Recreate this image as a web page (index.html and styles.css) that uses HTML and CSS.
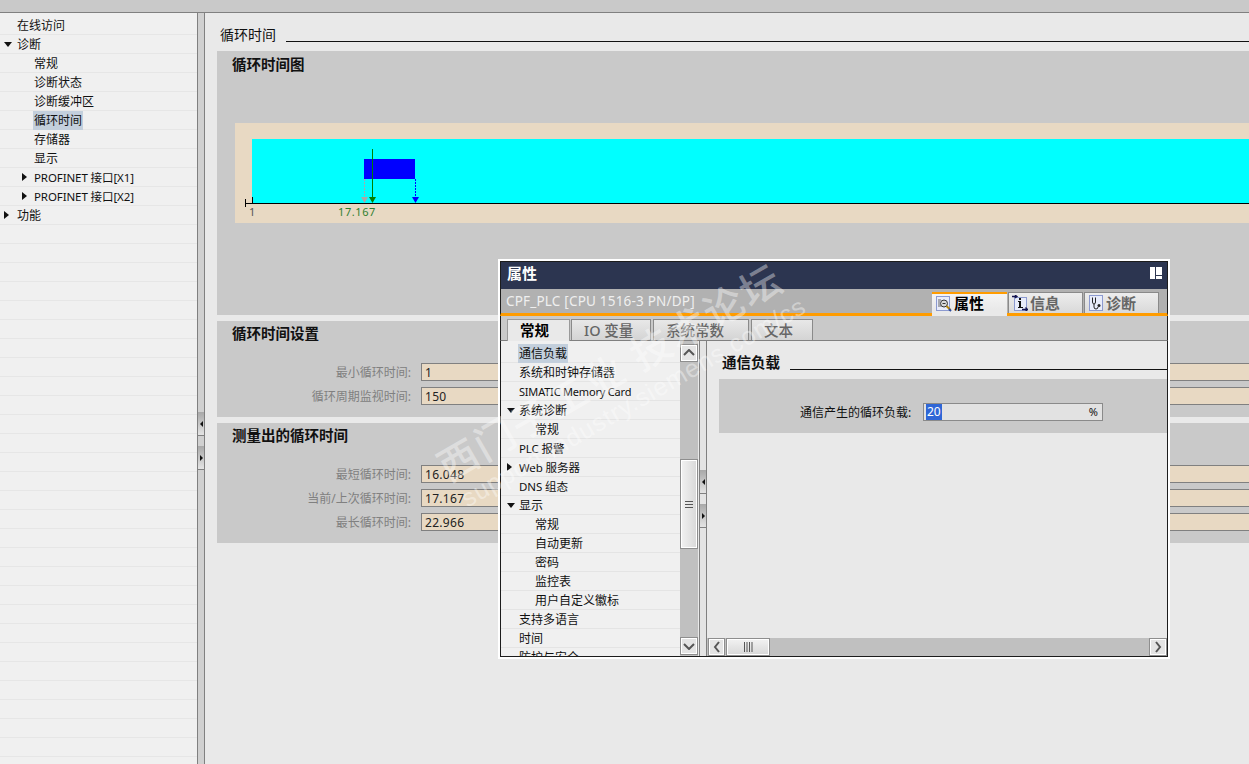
FILE: index.html
```html
<!DOCTYPE html>
<html lang="zh">
<head>
<meta charset="utf-8">
<title>循环时间</title>
<link rel="stylesheet" href="styles.css">
</head>
<body>
<div class="topbar"></div>
<div class="app">
  <nav class="tree">
    <div class="row"><span class="indent1">在线访问</span></div>
    <div class="row"><i class="arrow down a1"></i><span class="indent1">诊断</span></div>
    <div class="row"><span class="indent2">常规</span></div>
    <div class="row"><span class="indent2">诊断状态</span></div>
    <div class="row"><span class="indent2">诊断缓冲区</span></div>
    <div class="row"><span class="indent2 sel">循环时间</span></div>
    <div class="row"><span class="indent2">存储器</span></div>
    <div class="row"><span class="indent2">显示</span></div>
    <div class="row"><i class="arrow right a2"></i><span class="indent2 lat">PROFINET 接口[X1]</span></div>
    <div class="row"><i class="arrow right a2"></i><span class="indent2 lat">PROFINET 接口[X2]</span></div>
    <div class="row"><i class="arrow right a1"></i><span class="indent1">功能</span></div>
  </nav>
  <div class="splitter">
    <div class="grip grip-l"><i class="mini-l"></i></div>
    <div class="grip grip-r"><i class="mini-r"></i></div>
  </div>
  <main class="main">
    <div class="heading"><span>循环时间</span><b class="rule"></b></div>
    <section class="panel p1">
      <h2>循环时间图</h2>
      <div class="chart">
        <svg class="chart-svg" width="1014" height="100" viewBox="0 0 1014 100">
          <rect x="17" y="16" width="997" height="64" fill="#00ffff"/>
          <rect x="129" y="36" width="51" height="20" fill="#0000ff"/>
          <path d="M10 80.500H1014" stroke="#000"/>
          <path d="M10.500 76V84M17.500 74V80" stroke="#000"/>
          <path d="M129.500 56V75" stroke="#a8a8a8" stroke-dasharray="2 1"/>
          <path d="M126 74h7l-3.500 6z" fill="#a8a8a8"/>
          <path d="M137.500 26V75" stroke="#008000"/>
          <path d="M134 74h7l-3.500 6z" fill="#008000"/>
          <path d="M180.500 56V75" stroke="#0000ff" stroke-dasharray="2 1"/>
          <path d="M177 74h7l-3.500 6z" fill="#0000ff"/>
          <text x="14" y="93" class="t1">1</text>
          <text x="103" y="93" class="t2">17.167</text>
        </svg>
      </div>
    </section>
    <section class="panel p2">
      <h2>循环时间设置</h2>
      <div class="fields f2">
        <div class="field"><label>最小循环时间:</label><div class="val">1</div></div>
        <div class="field"><label>循环周期监视时间:</label><div class="val">150</div></div>
      </div>
    </section>
    <section class="panel p3">
      <h2>测量出的循环时间</h2>
      <div class="fields f3">
        <div class="field"><label>最短循环时间:</label><div class="val">16.048</div></div>
        <div class="field"><label>当前/上次循环时间:</label><div class="val">17.167</div></div>
        <div class="field"><label>最长循环时间:</label><div class="val">22.966</div></div>
      </div>
    </section>
  </main>
</div>

<div class="dialog">
  <div class="d-title"><span>属性</span>
    <svg width="12" height="12" viewBox="0 0 12 12"><path d="M0 0h5v12H0zM6 0h6v8H6zM6 9h6v3H6z" fill="#fff"/></svg>
  </div>
  <div class="d-sub">
    <span class="d-name">CPF_PLC [CPU 1516-3 PN/DP]</span>
    <div class="rtabs">
      <div class="rtab on">
        <svg width="16" height="16" viewBox="0 0 16 16"><rect x=".5" y=".5" width="13" height="14" fill="#e8ecfa" stroke="#8c9ad0"/><path d="M2 4h3M2 6h2M2 8h2M2 10h3" stroke="#666"/><circle cx="8" cy="7.500" r="3.500" fill="#d8d8d8" stroke="#333"/><path d="M6.500 7.500h3" stroke="#333"/><path d="M10.500 10l4 4" stroke="#b8860b" stroke-width="2"/><path d="M13 13l2 2" stroke="#2a4aa0" stroke-width="2"/></svg>
        <span>属性</span></div>
      <div class="rtab">
        <svg width="16" height="16" viewBox="0 0 16 16"><rect x="2.500" y="2.500" width="12" height="13" fill="#e8ecfa" stroke="#8c9ad0"/><path d="M0 1.500h4M3 0l2 1.500L3 3" stroke="#15154f" fill="none" stroke-width="1.300"/><path d="M7 3h2v2H7zM6 6h3v6h2v1H6v-1h1V7H6z" fill="#111"/><path d="M10 14.500h5M13.500 12.500l2 2-2 2" stroke="#15154f" fill="none" stroke-width="1.300"/></svg>
        <span>信息</span></div>
      <div class="rtab">
        <svg width="16" height="16" viewBox="0 0 16 16"><rect x="1.500" y=".5" width="13" height="15" fill="#e8ecfa" stroke="#8c9ad0"/><path d="M4.500 2.500V7q0 2 1.500 2t1.500-2V2.500M6 9v3q0 2 2 2t2-2" fill="none" stroke="#222"/><circle cx="11" cy="10.500" r="1.500" fill="#222"/></svg>
        <span>诊断</span></div>
    </div>
  </div>
  <div class="d-tabs">
    <div class="ltab on">常规</div>
    <div class="ltab">IO 变量</div>
    <div class="ltab">系统常数</div>
    <div class="ltab">文本</div>
  </div>
  <div class="d-body">
    <div class="d-nav">
      <div class="d-list">
        <div class="row"><span class="n1 sel">通信负载</span></div>
        <div class="row"><span class="n1">系统和时钟存储器</span></div>
        <div class="row"><span class="n1 lat card">SIMATIC Memory Card</span></div>
        <div class="row"><i class="arrow down a3"></i><span class="n1">系统诊断</span></div>
        <div class="row"><span class="n2">常规</span></div>
        <div class="row"><span class="n1 lat">PLC 报警</span></div>
        <div class="row"><i class="arrow right a3"></i><span class="n1 lat">Web 服务器</span></div>
        <div class="row"><span class="n1 lat">DNS 组态</span></div>
        <div class="row"><i class="arrow down a3"></i><span class="n1">显示</span></div>
        <div class="row"><span class="n2">常规</span></div>
        <div class="row"><span class="n2">自动更新</span></div>
        <div class="row"><span class="n2">密码</span></div>
        <div class="row"><span class="n2">监控表</span></div>
        <div class="row"><span class="n2">用户自定义徽标</span></div>
        <div class="row"><span class="n1">支持多语言</span></div>
        <div class="row"><span class="n1">时间</span></div>
        <div class="row"><span class="n1">防护与安全</span></div>
      </div>
      <div class="vscroll">
        <div class="sbtn"><svg width="12" height="8" viewBox="0 0 12 8"><path d="M1 6l5-5 5 5" fill="none" stroke="#555" stroke-width="2"/></svg></div>
        <div class="vtrack"><div class="vthumb"><svg width="10" height="7" viewBox="0 0 10 7"><path d="M1 .5h8M1 3.500h8M1 6.500h8" stroke="#555"/></svg></div></div>
        <div class="sbtn"><svg width="12" height="8" viewBox="0 0 12 8"><path d="M1 2l5 5 5-5" fill="none" stroke="#555" stroke-width="2"/></svg></div>
      </div>
    </div>
    <div class="d-split">
      <div class="grip grip-dl"><i class="mini-l"></i></div>
      <div class="grip grip-dr"><i class="mini-r"></i></div>
    </div>
    <div class="d-main">
      <div class="d-content">
        <div class="d-heading"><span>通信负载</span><b class="rule"></b></div>
        <div class="d-panel">
          <label>通信产生的循环负载:</label>
          <div class="d-input"><span class="hl">20</span><span class="pct">%</span></div>
        </div>
      </div>
      <div class="hscroll">
        <div class="sbtn hb"><svg width="8" height="12" viewBox="0 0 8 12"><path d="M6 1L2 6l4 5" fill="none" stroke="#555" stroke-width="2"/></svg></div>
        <div class="hthumb"><svg width="10" height="10" viewBox="0 0 10 10"><path d="M1.500 0v10M4 0v10M6.500 0v10M9 0v10" stroke="#555"/></svg></div>
        <div class="hspace"></div>
        <div class="sbtn"><svg width="8" height="12" viewBox="0 0 8 12"><path d="M2 1l4 5-4 5" fill="none" stroke="#555" stroke-width="2"/></svg></div>
      </div>
    </div>
  </div>
</div>

<div class="wm wm1">西门子工业 技术论坛</div>
<div class="wm wm2">support.industry.siemens.com/cs</div>
</body>
</html>
```
FILE: styles.css
```css
* { box-sizing: border-box; }
html, body { margin: 0; height: 764px; overflow: hidden; }
body {
  background: #e9e9e9;
  font: 12px/19px "Noto Sans", "Noto Sans CJK SC", sans-serif;
  color: #111;
  position: relative;
  display: flex;
  flex-direction: column;
}
.topbar { height: 13px; background: #c9c9c9; border-bottom: 1px solid #808080; flex: none; }
.app { flex: 1; display: flex; min-height: 0; }

.tree {
  width: 197px; flex: none; padding-top: 3px;
  background: #f0f0f0 repeating-linear-gradient(#f0f0f0 0 18px, #e6e6e6 18px 19px);
  background-position: 0 3px;
}
.row { height: 19px; position: relative; white-space: nowrap; border-bottom: 1px solid #e6e6e6; }
.indent1 { margin-left: 17px; display: inline-block; }
.indent2 { margin-left: 33px; display: inline-block; padding: 0 1px; }
.lat { letter-spacing: -.1px; font-size: 11.500px; }
.card { font-size: 11px; letter-spacing: -.2px; }
.sel { background: #c3cfdc; }
.arrow { position: absolute; width: 0; height: 0; border-style: solid; border-color: transparent; }
.arrow.down { border-width: 5px 4.500px 0; border-top-color: #111; top: 7px; }
.arrow.right { border-width: 4.500px 0 4.500px 5px; border-left-color: #111; top: 5px; }
.a1 { left: 4px; }
.a2 { left: 22px; }
.a3 { left: 6px; }

.splitter {
  width: 8px; flex: none; background: #d0d0d0;
  border-left: 1px solid #808080; border-right: 1px solid #808080;
  position: relative;
}
.grip {
  position: absolute; left: 0; right: 0; height: 24px; background: linear-gradient(#a8a8a8, #e4e4e4);
  border-bottom: 1px solid #808080; display: flex; align-items: center; justify-content: center;
}
.grip-l { top: 399px; }
.grip-r { top: 433px; }
.mini-l { border: 3.500px solid transparent; border-left: 0; border-right: 3.500px solid #111; }
.mini-r { border: 3.500px solid transparent; border-right: 0; border-left: 3.500px solid #111; }

.main { flex: 1; min-width: 0; padding: 0 0 0 12px; overflow: hidden; }
.heading { height: 38px; display: flex; align-items: center; font-size: 14px; padding: 5px 0 0 3px; }
.rule { flex: 1; height: 1px; background: #111; margin: 14px 0 0 10px; }
.panel { background: #c9c9c9; margin-bottom: 6px; overflow: hidden; }
.panel h2 { font-size: 14.500px; font-weight: 700; line-height: 20px; margin: 0; padding: 2px 0 0 15px; }
.p1 { height: 264px; }
.p1 h2 { padding-top: 3px; }
.p2 { height: 96px; }
.p3 { height: 120px; }
.chart { margin: 49px 0 0 18px; height: 100px; background: #e8d9c3; overflow: hidden; }
.chart-svg { display: block; }
.t1, .t2 { font-size: 11px; font-family: "Noto Sans", sans-serif; letter-spacing: .6px; }
.t1 { fill: #555; }
.t2 { fill: #2f7f2f; }

.fields { padding-left: 204px; display: flex; flex-direction: column; gap: 6px; }
.f2, .f3 { padding-top: 20px; }
.field { display: flex; height: 18px; align-items: center; position: relative; }
.field label {
  position: absolute; right: 100%; width: 180px; text-align: right; padding-right: 10px;
  color: #808080; white-space: nowrap;
}
.val {
  flex: 1; height: 18px; background: #e8d9c3; border: 1px solid #808080; border-right: 0;
  padding-left: 3px; line-height: 17px; letter-spacing: .3px; color: #222;
}

.dialog {
  position: absolute; left: 498px; top: 259px; width: 672px; height: 400px;
  border: 2px solid #fff; background: #e9e9e9; display: flex; flex-direction: column;
}
.dialog > * { flex: none; }
.d-title {
  height: 28px; background: #2c3550; color: #fff; font-weight: 700; font-size: 15px;
  display: flex; align-items: center; justify-content: space-between; padding: 0 5px 5px 6px;
  border: 1px solid #1c1c1c; border-bottom: 0;
}
.d-sub {
  height: 27px; background: #b1b1b1; border-bottom: 3px solid #ff9c00; display: flex;
  justify-content: space-between; padding: 3px 8px 0 5px; border-left: 1px solid #1c1c1c; border-right: 1px solid #1c1c1c;
}
.d-name { color: #efefef; font-size: 13.500px; line-height: 18px; letter-spacing: .2px; }
.rtabs { display: flex; gap: 1px; }
.rtab {
  width: 75px; height: 21px; display: flex; align-items: center; gap: 2px; padding: 0 0 1px 3px;
  background: linear-gradient(#ededed, #d9d9d9); border: 1px solid #8a8a8a; border-bottom: 0;
  font-size: 15px; font-weight: 700; color: #666; line-height: 20px;
}
.rtab svg { flex: none; }
.rtab.on {
  height: 24px; background: linear-gradient(#f4f4f4, #e9e9e9 70%); border: 0; border-top: 2px solid #ff9c00;
  color: #000; padding: 0 0 0 4px; position: relative; align-items: flex-start;
}
.rtab.on svg { margin-top: 2px; }
.rtab.on span { margin-top: -1px; }
.d-tabs {
  height: 25px; background: #c9c9c9; display: flex; padding: 3px 0 0 6px; gap: 1px;
  border-left: 1px solid #1c1c1c; border-right: 1px solid #1c1c1c; border-bottom: 1px solid #808080;
}
.ltab {
  height: 21px; padding: 0 12px; background: linear-gradient(#e8e8e8, #d4d4d4); border: 1px solid #8a8a8a; border-bottom: 0;
  font-size: 14.500px; font-weight: 500; color: #666; line-height: 20px; white-space: nowrap;
}
.ltab.on { background: #e9e9e9; color: #000; font-weight: 700; height: 22px; border-color: #9a9a9a; width: 63px; }
.ltab:nth-child(2) { width: 80px; }
.ltab:nth-child(3) { width: 96px; margin-left: 1px; }
.ltab:nth-child(4) { width: 62px; margin-left: 1px; }

.d-body {
  height: 316px; display: flex; background: #e9e9e9;
  border: 1px solid #1c1c1c; border-width: 0 1px 1px;
}
.d-nav { width: 198px; flex: none; display: flex; overflow: hidden; }
.d-list { width: 179px; flex: none; background: #f0f0f0; overflow: hidden; padding-top: 3px; }
.d-list .row { border-bottom-color: #e4e4e4; }
.n1 { margin-left: 17px; display: inline-block; padding: 0 1px; }
.n2 { margin-left: 34px; display: inline-block; }
.vscroll { width: 18px; flex: none; background: #c0c0c0; display: flex; flex-direction: column; padding: 3px 0 1px; margin-right: 1px; }
.sbtn {
  width: 18px; height: 18px; flex: none; background: #e4e4e4; border: 1px solid #8e8e8e; box-shadow: inset 0 0 0 1px #fff;
  display: flex; align-items: center; justify-content: center;
}
.vtrack { flex: 1; padding-top: 97px; }
.vthumb {
  height: 90px; background: linear-gradient(90deg, #f2f2f2, #d8d8d8); border: 1px solid #8e8e8e;
  box-shadow: inset 0 0 0 1px #fff; display: flex; align-items: center; justify-content: center;
}
.d-split {
  width: 8px; flex: none; position: relative; background: #e4e4e4;
  border-left: 1px solid #808080; border-right: 1px solid #808080;
}
.grip-dl { top: 129px; }
.grip-dr { top: 163px; }
.d-main { flex: 1; display: flex; flex-direction: column; min-width: 0; }
.d-content { flex: 1; }
.d-heading { height: 38px; display: flex; align-items: center; font-weight: 700; font-size: 14.500px; padding: 4px 0 0 15px; }
.d-panel {
  height: 54px; margin-left: 12px; background: #c9c9c9; display: flex; align-items: center; padding: 12px 0 0 81px;
}
.d-panel label { width: 113px; white-space: nowrap; }
.d-input {
  margin-left: 10px; width: 180px; height: 18px; background: #e2e2e2; border: 1px solid #8a8a8a;
  display: flex; justify-content: space-between; line-height: 16px; padding: 0 4px 0 2px;
}
.hl { background: #2f66d6; color: #fff; height: 16px; padding: 0 1px; }
.pct { font-size: 11px; }
.hscroll { height: 18px; background: #c0c0c0; display: flex; padding-left: 1px; }
.hb { width: 17px; }
.hthumb {
  width: 44px; margin-left: 1px; background: linear-gradient(#f2f2f2, #d8d8d8); border: 1px solid #8e8e8e;
  box-shadow: inset 0 0 0 1px #fff; display: flex; align-items: center; justify-content: center;
}
.hspace { flex: 1; }

.wm {
  position: absolute; color: rgba(255, 255, 255, .4); white-space: nowrap; transform: rotate(-30deg);
  transform-origin: left center; pointer-events: none;
}
.wm1 { left: 441px; top: 448px; font-size: 40px; font-weight: 500; line-height: 44px; letter-spacing: 2px; }
.wm2 { left: 463px; top: 483px; font-size: 25px; line-height: 34px; letter-spacing: 1px; font-family: "Liberation Sans", sans-serif; }
```
